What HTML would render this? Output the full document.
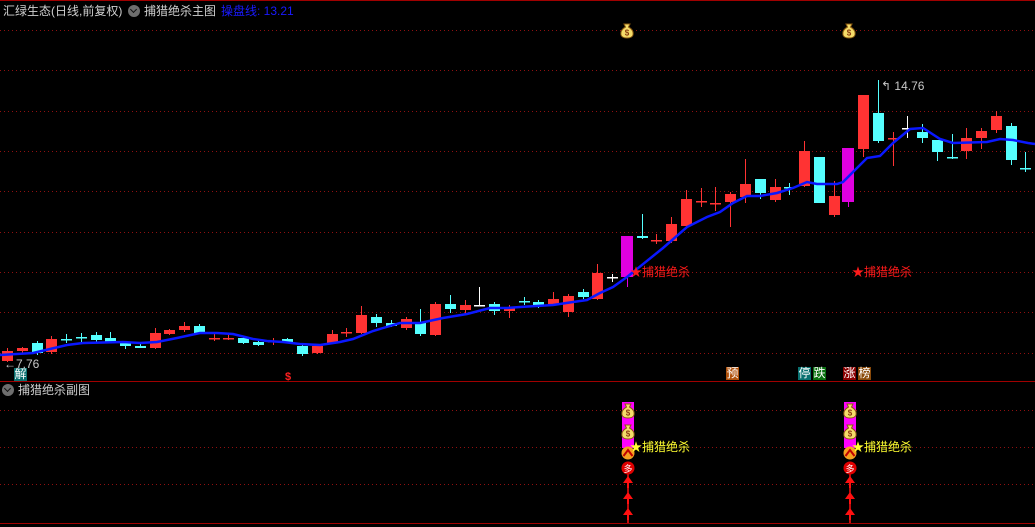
<!DOCTYPE html>
<html><head><meta charset="utf-8">
<style>
html,body{margin:0;padding:0;background:#000;width:1035px;height:527px;overflow:hidden;font-family:"Liberation Sans","Noto Sans CJK SC",sans-serif;}
svg{position:absolute;left:0;top:0}
.t{position:absolute;font-size:12px;white-space:nowrap;line-height:14px}
.ic{position:absolute;width:12px;height:12px;border-radius:50%;background:#6e6e6e}
.ic:after{content:"";position:absolute;left:3px;top:2px;width:4px;height:4px;border-right:1.5px solid #111;border-bottom:1.5px solid #111;transform:rotate(45deg)}
.box{position:absolute;width:13px;height:13px;font-size:12px;line-height:13px;text-align:center;color:#fff}
</style></head><body>
<svg id="s" width="1035" height="527" xmlns="http://www.w3.org/2000/svg">
<defs>
<g id="bag"><path d="M-3,-7 L3,-7 L1.5,-4 Q7,-1 6,4 Q5,7 0,7 Q-5,7 -6,4 Q-7,-1 -1.5,-4 Z" fill="#f5dc6a" stroke="#8a5a10" stroke-width="1"/><text x="0" y="4.5" font-size="8" text-anchor="middle" fill="#8a3a10" font-family="Liberation Sans" font-weight="bold">$</text></g>
<g id="arr"><path d="M0,-6 L5,1 L1,1 L1,6 L-1,6 L-1,1 L-5,1 Z" fill="#ff1010"/></g>
</defs>
<line x1="0" y1="0.5" x2="1035" y2="0.5" stroke="#a00000"/>
<line x1="0" y1="381.5" x2="1035" y2="381.5" stroke="#a00000"/>
<line x1="0" y1="523.5" x2="1035" y2="523.5" stroke="#a00000"/>
<g id="g"></g>
<g id="c"></g>
<polyline id="ma" fill="none" stroke="#0a18ff" stroke-width="2.5"/>
<rect x="622" y="402" width="12" height="46" fill="#ff00ff"/>
<rect x="844" y="402" width="12" height="46" fill="#ff00ff"/>
<line x1="628" y1="470" x2="628" y2="523" stroke="#ff1010" stroke-width="1.5"/>
<line x1="850" y1="470" x2="850" y2="523" stroke="#ff1010" stroke-width="1.5"/>
<use href="#bag" x="628" y="411"/><use href="#bag" x="628" y="432"/>
<use href="#bag" x="850" y="411"/><use href="#bag" x="850" y="432"/>
<use href="#bag" x="627" y="31"/><use href="#bag" x="849" y="31"/>
<g>
<circle cx="628" cy="453" r="6.5" fill="#f7a020"/><path d="M623.5,456 L628,450 L632.5,456" stroke="#c00000" stroke-width="2" fill="none"/>
<circle cx="628" cy="468" r="6.5" fill="#e00000"/><text x="628" y="472" font-size="9" fill="#fff" text-anchor="middle" font-family="Noto Sans CJK SC">多</text>
<circle cx="850" cy="453" r="6.5" fill="#f7a020"/><path d="M845.5,456 L850,450 L854.5,456" stroke="#c00000" stroke-width="2" fill="none"/>
<circle cx="850" cy="468" r="6.5" fill="#e00000"/><text x="850" y="472" font-size="9" fill="#fff" text-anchor="middle" font-family="Noto Sans CJK SC">多</text>
</g>
<use href="#arr" x="628" y="482"/><use href="#arr" x="628" y="498"/><use href="#arr" x="628" y="514"/>
<use href="#arr" x="850" y="482"/><use href="#arr" x="850" y="498"/><use href="#arr" x="850" y="514"/>
<text x="881" y="90" font-size="12" fill="#c8c8c8" font-family="Liberation Sans">↰ 14.76</text>
<text x="4" y="368" font-size="12" fill="#c8c8c8" font-family="Liberation Sans">←7.76</text>
<text x="285" y="380" font-size="11" fill="#ff2020" font-family="Liberation Sans" font-weight="bold">$</text>
</svg>
<div class="t" style="left:3px;top:4px;color:#d0d0d0">汇绿生态(日线,前复权)</div>
<div class="ic" style="left:128px;top:5px"></div>
<div class="t" style="left:144px;top:4px;color:#d0d0d0">捕猎绝杀主图</div>
<div class="t" style="left:221px;top:4px;color:#1a1aff">操盘线: 13.21</div>
<div class="ic" style="left:2px;top:384px"></div>
<div class="t" style="left:18px;top:383px;color:#d0d0d0">捕猎绝杀副图</div>
<div class="t" style="left:630px;top:265px;color:#ff1a1a">★捕猎绝杀</div>
<div class="t" style="left:852px;top:265px;color:#ff1a1a">★捕猎绝杀</div>
<div class="t" style="left:630px;top:440px;color:#ffff30">★捕猎绝杀</div>
<div class="t" style="left:852px;top:440px;color:#ffff30">★捕猎绝杀</div>
<div class="box" style="left:14px;top:368px;background:#0a7070">解</div>
<div class="box" style="left:726px;top:367px;background:#b0520c">预</div>
<div class="box" style="left:798px;top:367px;background:#0a7070">停</div>
<div class="box" style="left:813px;top:367px;background:#0a7010">跌</div>
<div class="box" style="left:843px;top:367px;background:#8a0000">涨</div>
<div class="box" style="left:858px;top:367px;background:#8a4a0a">榜</div>
<script>
var NS="http://www.w3.org/2000/svg";
function el(p,t,a){var e=document.createElementNS(NS,t);for(var k in a)e.setAttribute(k,a[k]);p.appendChild(e);return e;}
var g=document.getElementById('g');
[30,70,111,151,191,232,272,312,353,410,447,484].forEach(function(y){el(g,'line',{x1:0,y1:y+.5,x2:1035,y2:y+.5,stroke:'#901010','stroke-dasharray':'1 3'});});
var R='#ff3333',C='#55ffff',W='#ffffff',M='m';
var d=[[351,361,348,362,R],[348,351,347,354,R],[343,353,341,355,C],[339,352,336,354,R],[339,340,334,343,C],[337,338,333,342,C],[335,340,332,342,C],[338,343,332,343,C],[343,346,341,349,C],[346,348,344,348,C],
[333,348,328,349,R],[330,334,329,335,R],[326,330,322,332,R],[326,333,324,334,C],[338,339,334,341,R],[338,339,335,340,R],[338,343,337,344,C],[342,345,341,346,C],[341,342,338,345,R],[339,342,338,343,C],
[346,354,345,356,C],[346,353,345,354,R],[334,343,330,344,R],[332,333,328,337,R],[315,333,306,334,R],[317,323,314,327,C],[323,326,320,327,C],[319,328,317,330,R],[323,334,309,336,C],[304,335,302,336,R],
[304,309,295,313,C],[305,310,300,313,R],[305,306,287,306,W],[304,311,302,315,C],[308,311,305,318,R],[301,302,297,305,C],[302,306,300,308,C],[299,304,292,305,R],[296,312,294,317,R],[292,297,289,299,C],
[273,299,264,300,R],[277,278,274,282,W],[236,277,236,283,M],[236,238,214,239,C],[240,241,234,244,R],[224,241,217,243,R],[199,226,190,227,R],[201,202,188,207,R],[203,204,187,211,R],[194,202,192,227,R],
[184,197,159,203,R],[179,193,179,199,C],[187,200,179,202,R],[187,188,183,195,C],[151,186,141,187,R],[157,203,157,203,C],[196,215,181,217,R],[148,202,148,203,M],[95,149,95,157,R],[113,141,80,143,C],
[138,139,132,166,R],[128,129,116,138,W],[132,138,124,143,C],[140,152,140,161,C],[157,158,134,159,C],[138,151,128,159,R],[131,138,128,149,R],[116,130,111,133,R],[126,160,123,165,C],[168,169,152,172,C]];
var c=document.getElementById('c');
d.forEach(function(v,i){var x=Math.round(7+i*14.76);var col=v[4];
 if(col===M){el(c,'rect',{x:x-6,y:v[0],width:12,height:v[1]-v[0],fill:'#e000e0'});el(c,'line',{x1:x+.5,y1:v[1],x2:x+.5,y2:v[3]+4,stroke:'#e000e0'});return;}
 el(c,'line',{x1:x+.5,y1:v[2],x2:x+.5,y2:v[3],stroke:col});
 var h=v[1]-v[0];
 if(h<=1) el(c,'rect',{x:x-5,y:v[0],width:11,height:1.5,fill:col});
 else el(c,'rect',{x:x-5,y:v[0],width:11,height:h,fill:col});
});
var pts=[[0,355],[33,353],[50,349],[67,345],[83,343],[123,342],[140,343],[157,342],[177,338],[200,333],[217,333],[233,334],[253,339],[267,341],[283,342],[300,344],[320,345],[340,342],[353,339],[373,331],[400,323],[420,323],[443,318],[467,314],[490,308],[507,308],[520,307],[553,305],[573,302],[587,300],[600,293],[613,287],[627,277],[663,248],[687,227],[707,217],[720,212],[733,203],[747,196],[760,196],[777,193],[793,188],[807,182],[817,184],[837,184],[843,182],[857,168],[867,158],[880,156],[893,143],[910,129],[923,128],[940,139],[953,143],[987,142],[1000,139],[1013,140],[1028,143],[1035,144]];
document.getElementById('ma').setAttribute('points',pts.map(function(p){return p.join(',')}).join(' '));
</script>
</body></html>
